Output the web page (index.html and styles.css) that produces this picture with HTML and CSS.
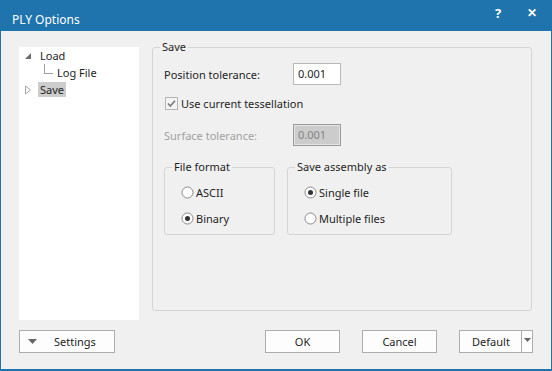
FILE: index.html
```html
<!DOCTYPE html>
<html lang="en">
<head>
  <meta charset="UTF-8" />
  <title>PLY Options</title>
  <link rel="stylesheet" href="styles.css">
</head>
<body>
  <div class="window">
    <div class="titlebar">
      <span class="title">PLY Options</span>
      <span class="title-btn">?</span>
      <span class="title-btn close">&#x2715;</span>
    </div>

    <div class="content">
      <div class="main">
        <ul class="tree">
          <li class="node">
            <svg class="twisty" width="8" height="8" viewBox="0 0 8 8"><path d="M7 1 L7 7 L1 7 Z" fill="#6d6d6d"/></svg>
            <span>Load</span>
          </li>
          <li class="node child">
            <span class="branch"></span>
            <span>Log File</span>
          </li>
          <li class="node">
            <svg class="twisty" width="8" height="10" viewBox="0 0 8 10"><path d="M1.5 1 L6.5 5 L1.5 9 Z" fill="none" stroke="#a6a6a6"/></svg>
            <span class="selected">Save</span>
          </li>
        </ul>

        <fieldset class="group save-box">
          <legend>Save</legend>

          <div class="row">
            <label class="label">Position tolerance:</label>
            <input class="field" type="text" value="0.001">
          </div>

          <div class="check-row">
            <svg class="check" width="13" height="13" viewBox="0 0 13 13">
              <rect x="0.5" y="0.5" width="12" height="12" fill="#f4f4f4" stroke="#b5b5b5"/>
              <path d="M3 6.5 L5.3 9 L10 3.8" fill="none" stroke="#7a7a7a" stroke-width="1.6"/>
            </svg>
            <span>Use current tessellation</span>
          </div>

          <div class="row">
            <label class="label disabled">Surface tolerance:</label>
            <input class="field off" type="text" value="0.001" disabled>
          </div>

          <div class="sub-groups">
            <fieldset class="group format-box">
              <legend>File format</legend>
              <div class="radio">
                <svg width="13" height="13" viewBox="0 0 13 13"><circle cx="6.5" cy="6.5" r="5.5" fill="#fff" stroke="#8a8a8a"/></svg>
                <span>ASCII</span>
              </div>
              <div class="radio">
                <svg width="13" height="13" viewBox="0 0 13 13"><circle cx="6.5" cy="6.5" r="5.5" fill="#fff" stroke="#8a8a8a"/><circle cx="6.5" cy="6.5" r="2.5" fill="#333"/></svg>
                <span>Binary</span>
              </div>
            </fieldset>

            <fieldset class="group assembly-box">
              <legend>Save assembly as</legend>
              <div class="radio">
                <svg width="13" height="13" viewBox="0 0 13 13"><circle cx="6.5" cy="6.5" r="5.5" fill="#fff" stroke="#8a8a8a"/><circle cx="6.5" cy="6.5" r="2.5" fill="#333"/></svg>
                <span>Single file</span>
              </div>
              <div class="radio">
                <svg width="13" height="13" viewBox="0 0 13 13"><circle cx="6.5" cy="6.5" r="5.5" fill="#fff" stroke="#8a8a8a"/></svg>
                <span>Multiple files</span>
              </div>
            </fieldset>
          </div>
        </fieldset>
      </div>

      <div class="footer">
        <button class="btn settings">
          <svg width="9" height="5" viewBox="0 0 9 5"><path d="M0 0 L9 0 L4.5 5 Z" fill="#666"/></svg>
          <span>Settings</span>
        </button>
        <div class="spacer"></div>
        <button class="btn">OK</button>
        <button class="btn">Cancel</button>
        <div class="split">
          <button class="split-main">Default</button>
          <button class="split-arrow">
            <svg width="7" height="4" viewBox="0 0 7 4"><path d="M0 0 L7 0 L3.5 4 Z" fill="#666"/></svg>
          </button>
        </div>
      </div>
    </div>
  </div>
</body>
</html>
```

FILE: styles.css
```css
* {
  margin: 0;
  padding: 0;
  box-sizing: border-box;
}

body {
  font-family: 'Noto Sans', 'Open Sans', sans-serif;
  font-size: 11px;
  color: #1e1e1e;
  background: #f0f0f0;
}

.window {
  width: 552px;
  height: 371px;
  border: 1px solid #1f74ad;
  border-top: none;
  border-bottom-width: 2px;
  background: #f0f0f0;
  display: flex;
  flex-direction: column;
}

.titlebar {
  height: 31px;
  margin: 0 -1px;
  background: #1f74ad;
  color: #fff;
  display: flex;
  align-items: center;
  padding-left: 12px;
}

.title {
  flex: 1;
  font-size: 12px;
  padding-top: 7px;
}

.title-btn {
  width: 34px;
  text-align: center;
  font-weight: bold;
  font-size: 13px;
  margin-top: -6px;
}

.title-btn.close {
  font-size: 12px;
  margin-right: 3px;
}

.content {
  flex: 1;
  padding: 16px 18px 0 18px;
  display: flex;
  flex-direction: column;
}

.main {
  display: flex;
  gap: 13px;
  height: 273px;
}

/* tree */
.tree {
  list-style: none;
  width: 120px;
  background: #fff;
}

.node {
  display: flex;
  align-items: center;
  height: 17px;
  padding-left: 3px;
}

.twisty {
  width: 12px;
  margin-right: 6px;
}

.child {
  padding-left: 25px;
}

.branch {
  width: 9px;
  height: 10px;
  border-left: 1px solid #a0a0a0;
  border-bottom: 1px solid #a0a0a0;
  margin: -8px 4px 0 0;
}

.selected {
  background: #cccccc;
  padding: 0 2px;
  margin-left: -2px;
  line-height: 15px;
}

/* group boxes */
.group {
  border: 1px solid #d5d5d5;
  border-radius: 3px;
}

.group legend {
  padding: 0 2px;
  line-height: 14px;
}

.save-box {
  width: 380px;
  height: 271px;
  margin-top: -7px;
  padding: 9px 11px 0 11px;
}

.save-box > legend {
  margin-left: -4px;
}

.row {
  display: flex;
  align-items: center;
  height: 22px;
}

.label {
  width: 129px;
}

.disabled {
  color: #a0a0a0;
}

.field {
  width: 48px;
  height: 22px;
  border: 1px solid #b9b9b9;
  background: #fff;
  font: inherit;
  color: #1e1e1e;
  padding: 0 0 2px 4px;
}

.field.off {
  background: #cccccc;
  border: 1px solid #9a9a9a;
  box-shadow: inset 0 0 0 1px #e4e4e4;
  color: #838383;
}

.check-row {
  display: flex;
  align-items: center;
  gap: 3px;
  height: 17px;
  margin: 10px 0 12px 1px;
}

.sub-groups {
  display: flex;
  gap: 12px;
  margin-top: 14px;
}

.format-box {
  width: 111px;
  height: 75px;
  padding: 10px 0 0 16px;
}

.assembly-box {
  width: 165px;
  height: 75px;
  padding: 10px 0 0 16px;
}

.sub-groups legend {
  margin-left: -9px;
}

.radio {
  display: flex;
  align-items: center;
  gap: 2px;
  height: 16px;
  margin-bottom: 10px;
}

/* footer buttons */
.footer {
  display: flex;
  gap: 22px;
  margin-top: 10px;
}

.spacer {
  flex: 1;
}

.btn,
.split-main,
.split-arrow {
  font: inherit;
  color: #1e1e1e;
  background: #fdfdfd;
  border: 1px solid #adadad;
  height: 23px;
}

.btn {
  width: 75px;
}

.settings {
  width: 96px;
  display: flex;
  align-items: center;
  padding-left: 8px;
  gap: 17px;
}

.split {
  display: flex;
}

.split-main {
  width: 62px;
  border-right: none;
  padding-left: 1px;
}

.split-arrow {
  width: 12px;
  display: flex;
  align-items: center;
  justify-content: center;
  padding-bottom: 4px;
}
```
